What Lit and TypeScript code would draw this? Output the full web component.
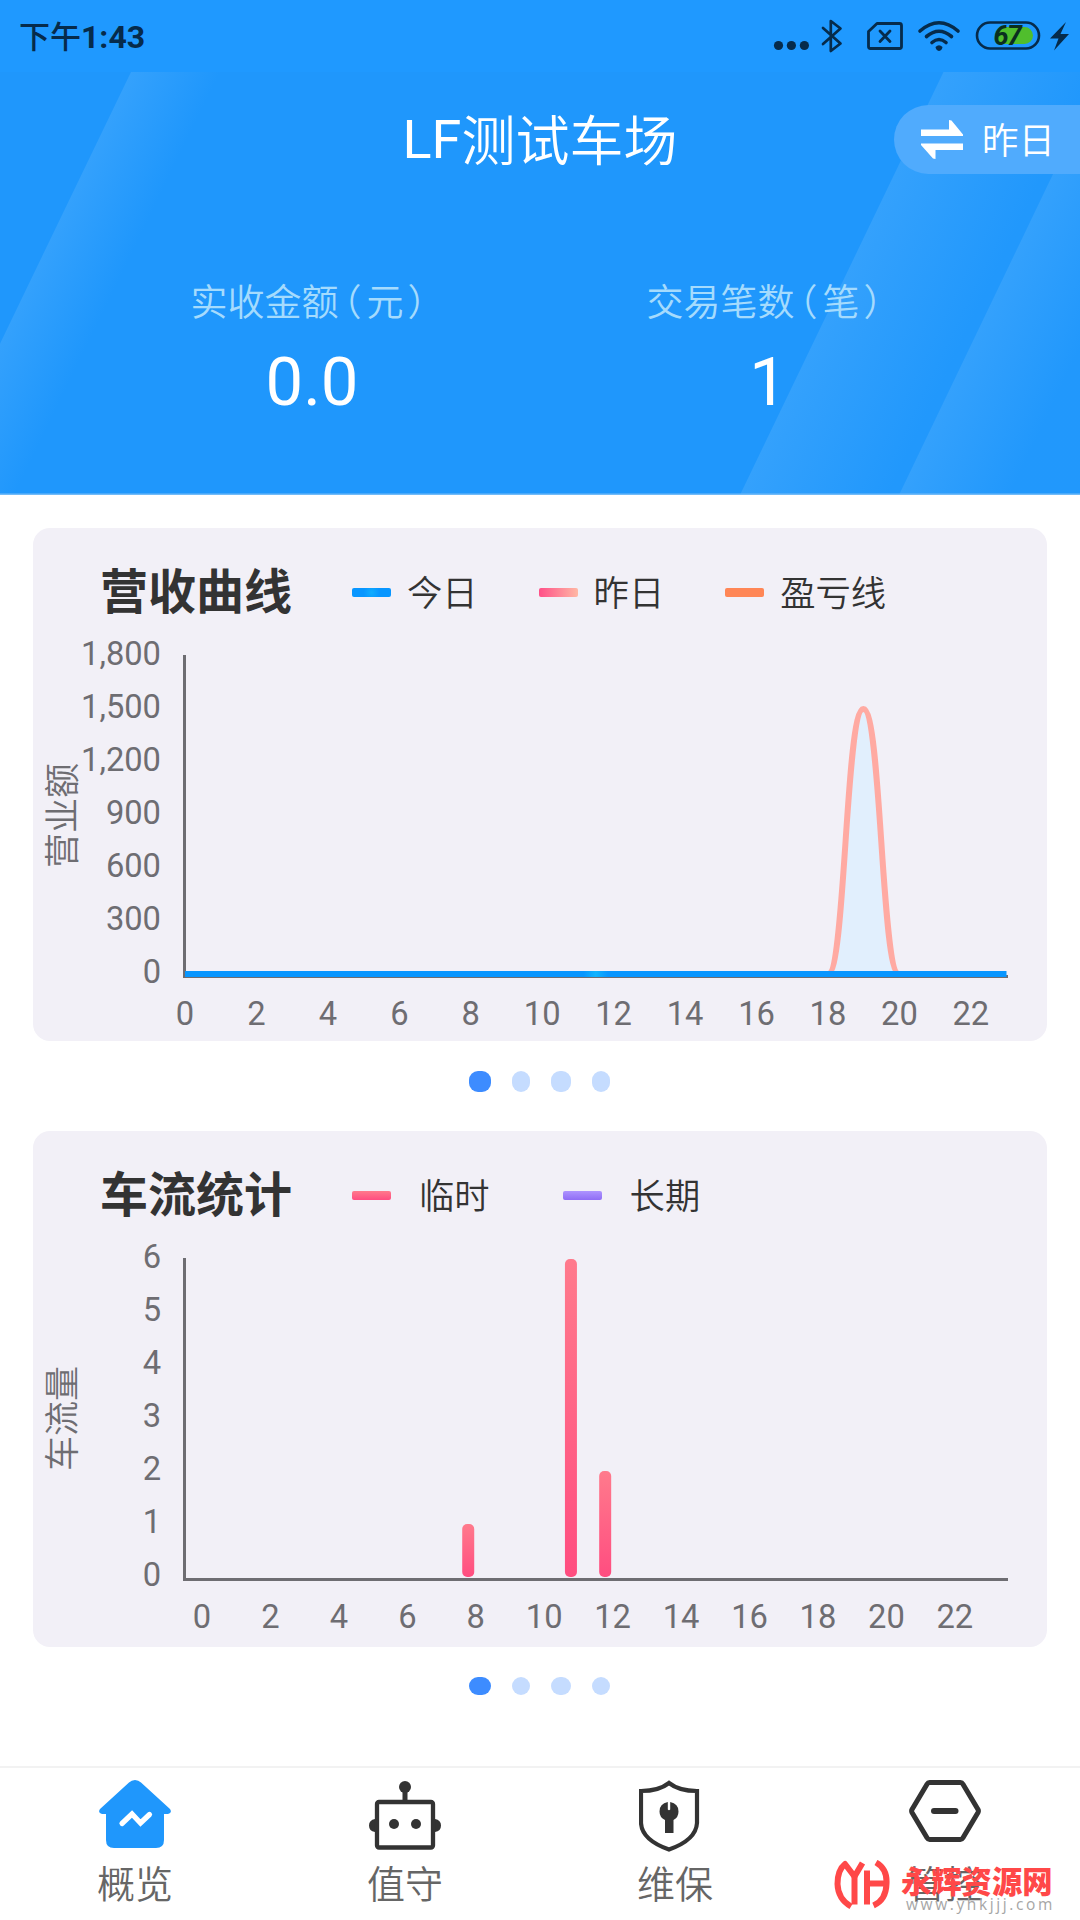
import { LitElement, html, svg, css } from "lit";
import { customElement, property } from "lit/decorators.js";

const FONT = css`Roboto, "Noto Sans CJK SC", sans-serif`;

interface LegendItem {
  label: string;
  kind: string;
}

@customElement("status-bar")
class StatusBar extends LitElement {
  static styles = css`
    :host {
      display: flex;
      align-items: center;
      justify-content: space-between;
      height: 72px;
      padding: 0 11px 0 19px;
      box-sizing: border-box;
      background: #1f99ff;
      color: #062b4b;
      font-family: ${FONT};
    }
    .time {
      padding-top: 2px;
      font-size: 32px;
      line-height: 40px;
      font-weight: 700;
      white-space: nowrap;
    }
    .cn {
      font-size: 31px;
      font-weight: 500;
    }
    svg {
      display: block;
    }
    .level {
      font: italic 700 27px Roboto, sans-serif;
      letter-spacing: -1.5px;
    }
  `;
  render() {
    return html`
      <div class="time"><span class="cn">下午</span>1:43</div>
      <svg width="300" height="72" viewBox="769 0 300 72" fill="none" stroke="#062b4b">
        <g fill="#062b4b" stroke="none">
          <circle cx="778.5" cy="45.5" r="4.6" />
          <circle cx="791.4" cy="45.5" r="4.6" />
          <circle cx="804.4" cy="45.5" r="4.6" />
        </g>
        <path d="M823 28 L840.500 43.500 L830.800 51 V21 L840.500 28.500 L823 44" stroke-width="2.7" stroke-linejoin="round" stroke-linecap="round" />
        <path d="M877 23.500 H899.500 Q901.500 23.500 901.500 25.500 V46.500 Q901.500 48.500 899.500 48.500 H870.500 Q868.500 48.500 868.500 46.500 V31.500 Z" stroke-width="2.8" stroke-linejoin="round" />
        <path d="M880 31 L890 41.500 M890 31 L880 41.500" stroke-width="2.8" stroke-linecap="round" />
        <g stroke-width="3.6" stroke-linecap="round">
          <path d="M920 31 Q939 14.500 958 31" />
          <path d="M926.500 36.500 Q939 26 951.500 36.500" />
          <path d="M932 42.500 Q939 36.500 946 42.500" />
        </g>
        <path d="M935.500 47 Q939 43.500 942.500 47 Q942 50.500 939 51 Q936 50.500 935.500 47 Z" fill="#062b4b" stroke="none" />
        <rect x="977" y="22.500" width="62" height="26" rx="13" stroke-width="2.6" />
        <path d="M1000 27 H1024.500 A8.500 8.500 0 0 1 1024.500 44 H1000 Q994 35 1000 27 Z" fill="#50be2d" stroke="none" />
        <text class="level" x="993.500" y="45" fill="#0a2e20" stroke="none">67</text>
        <path d="M1066 22 L1050 38.500 H1058.500 L1054 50.500 L1069 34 H1060.500 Z" fill="#062b4b" stroke="none" />
      </svg>
    `;
  }
}

@customElement("summary-header")
class SummaryHeader extends LitElement {
  static styles = css`
    :host {
      display: block;
      position: relative;
      height: 423px;
      background: #1f97fc;
      color: #fff;
      font-family: ${FONT};
    }
    .backdrop {
      position: absolute;
      inset: 0;
      display: block;
    }
    .content {
      position: relative;
      display: flex;
      flex-direction: column;
    }
    .titlebar {
      display: grid;
      grid-template-columns: 1fr auto 1fr;
      align-items: center;
      height: 69px;
      margin-top: 33px;
    }
    .title {
      grid-column: 2;
      font-size: 54px;
      line-height: 69px;
      white-space: nowrap;
    }
    .light {
      font-weight: 350;
      line-height: 1;
      vertical-align: -3px;
    }
    .switch {
      justify-self: end;
      display: flex;
      align-items: center;
      box-sizing: border-box;
      width: 186px;
      height: 69px;
      padding-left: 27px;
      gap: 19px;
      border-radius: 35px 0 0 35px;
      background: #50abfd;
      font-size: 36.500px;
      font-weight: 350;
      white-space: nowrap;
    }
    .switch svg {
      flex: none;
    }
    .switch span {
      padding-bottom: 2px;
    }
    .stats {
      display: grid;
      grid-template-columns: 456px 456px;
      padding: 105px 84px 0;
    }
    .stat {
      display: flex;
      flex-direction: column;
      align-items: center;
    }
    .label {
      height: 50px;
      line-height: 50px;
      font-size: 37px;
      font-weight: 350;
      color: #a5dbfd;
      white-space: nowrap;
    }
    .open {
      margin-left: -14px;
      margin-right: 5px;
    }
    .close {
      margin-left: 4px;
      margin-right: -11px;
    }
    .value {
      margin-top: 13px;
      height: 80px;
      line-height: 80px;
      font-size: 67px;
    }
  `;
  render() {
    return html`
      <svg class="backdrop" width="1080" height="423" viewBox="0 72 1080 423">
        <defs>
          <linearGradient id="a" gradientUnits="userSpaceOnUse" x1="65" y1="208" x2="137" y2="243">
            <stop offset="0" stop-color="#34a1fc" />
            <stop offset="1" stop-color="#34a1fc" stop-opacity="0" />
          </linearGradient>
          <linearGradient id="b" gradientUnits="userSpaceOnUse" x1="842" y1="284" x2="962" y2="342">
            <stop offset="0" stop-color="#34a1fc" />
            <stop offset="1" stop-color="#34a1fc" stop-opacity="0.1" />
          </linearGradient>
          <linearGradient id="c" gradientUnits="userSpaceOnUse" x1="1000" y1="284" x2="1090" y2="327">
            <stop offset="0" stop-color="#34a1fc" />
            <stop offset="1" stop-color="#34a1fc" stop-opacity="0.1" />
          </linearGradient>
        </defs>
        <path d="M131 72 H230 L27 495 H-73 Z" fill="url(#a)" />
        <path d="M943.500 72 H1102 L899 495 H740 Z" fill="url(#b)" />
        <path d="M1102 72 H1300 V495 H899 Z" fill="url(#c)" />
        <rect x="0" y="493.500" width="1080" height="1.500" fill="#72bbf8" />
      </svg>
      <div class="content">
        <div class="titlebar">
          <div class="title">LF<span class="light">测试车场</span></div>
          <div class="switch">
            <svg width="42" height="40" viewBox="0 0 42 40" fill="#fff">
              <path d="M0 9.500 H28 V0 L30.500 0.500 L42 14.500 V16 H0 Z" />
              <path d="M42 30 H14.500 V39 L12 38.500 L0 25 V23.500 H42 Z" />
            </svg>
            <span>昨日</span>
          </div>
        </div>
        <div class="stats">
          <div class="stat">
            <div class="label">实收金额<span class="open">（</span>元<span class="close">）</span></div>
            <div class="value">0.0</div>
          </div>
          <div class="stat">
            <div class="label">交易笔数<span class="open">（</span>笔<span class="close">）</span></div>
            <div class="value">1</div>
          </div>
        </div>
      </div>
    `;
  }
}

@customElement("chart-card")
class ChartCard extends LitElement {
  @property() heading = "";
  @property() variant: "line" | "bar" = "line";
  @property() axisName = "";
  @property({ attribute: false }) legend: LegendItem[] = [];
  @property({ attribute: false }) ticks: string[] = [];
  @property({ attribute: false }) bars: { hour: number; value: number }[] = [];

  static styles = css`
    :host {
      display: block;
      overflow: hidden;
      border-radius: 17px;
      background: #f2f0f7;
      color: #333;
      font-family: ${FONT};
    }
    .head {
      display: flex;
      align-items: center;
      height: 70px;
      padding: 29px 0 5px 67px;
    }
    .heading {
      width: 252px;
      padding-top: 1px;
      font-size: 48px;
      line-height: 70px;
      font-weight: 700;
      white-space: nowrap;
    }
    .legend {
      display: flex;
      gap: 61px;
    }
    .legend.wide {
      gap: 73px;
    }
    .item {
      display: flex;
      align-items: center;
      gap: 16px;
      font-size: 35.300px;
      line-height: 46px;
      font-weight: 350;
      white-space: nowrap;
    }
    .item span:last-child {
      padding-top: 4px;
    }
    .item:last-child {
      margin-right: 0;
    }
    .wide .item {
      gap: 28px;
    }
    .swatch {
      width: 39px;
      height: 9px;
      border-radius: 2px;
    }
    .today {
      background: radial-gradient(circle at 50% 50%, #10adff 0, #0896ff 8px);
    }
    .yesterday {
      background: linear-gradient(90deg, #ff5088, #ffb8a5);
    }
    .balance {
      background: #ff8656;
    }
    .temp {
      background: linear-gradient(180deg, #ff7a8c, #ff4d80);
    }
    .long {
      background: linear-gradient(180deg, #ae94ff, #8f6df5);
    }
    svg {
      display: block;
    }
    text {
      font-family: ${FONT};
      font-size: 32.700px;
      fill: #6e6d72;
    }
    .axis-name {
      font-size: 35px;
      font-weight: 350;
    }
  `;

  private hours(x0: number, step: number) {
    return Array.from({ length: 12 }, (_, i) => svg`
      <text x=${x0 + i * 2 * step} y="393" text-anchor="middle">${i * 2}</text>`);
  }

  private linePlot() {
    return svg`
      <path d="M795 342 C812.500 342 812.500 77 830.400 77 C848.300 77 848.300 342 866 342 Z" fill="#e1effd" />
      <path d="M795 342 C812.500 342 812.500 77 830.400 77 C848.300 77 848.300 342 866 342" fill="none" stroke="#ffaaa2" stroke-width="6" />
      <path d="M151.500 344.500 H975" stroke="#6e6d72" stroke-width="3" />
      <rect x="152" y="339" width="821.500" height="6" fill="url(#base)" />
      ${this.hours(152, 35.72)}`;
  }

  private barPlot() {
    return svg`
      <path d="M151.500 344.500 H975" stroke="#6e6d72" stroke-width="3" />
      ${this.bars.map((b) => svg`
        <rect x=${155.300 + b.hour * 34.240} y=${342 - b.value * 53} width="12" height=${b.value * 53} rx="5" fill="url(#bar)" />`)}
      ${this.hours(169, 34.22)}`;
  }

  render() {
    return html`
      <div class="head">
        <div class="heading">${this.heading}</div>
        <div class="legend ${this.variant === "bar" ? "wide" : ""}">
          ${this.legend.map((l) => html`<div class="item"><span class="swatch ${l.kind}"></span><span>${l.label}</span></div>`)}
        </div>
      </div>
      <svg width="1014" height="410" viewBox="0 0 1014 410">
        <defs>
          <linearGradient id="base" gradientUnits="userSpaceOnUse" x1="152" y1="0" x2="973.500" y2="0">
            <stop offset="0" stop-color="#0896ff" />
            <stop offset="0.485" stop-color="#0896ff" />
            <stop offset="0.5" stop-color="#10b4ff" />
            <stop offset="0.515" stop-color="#0896ff" />
            <stop offset="1" stop-color="#0896ff" />
          </linearGradient>
          <linearGradient id="bar" x1="0" y1="0" x2="0" y2="1">
            <stop offset="0" stop-color="#ff7a8c" />
            <stop offset="1" stop-color="#ff4d80" />
          </linearGradient>
        </defs>
        ${this.ticks.map((t, i) => svg`<text x="128" y=${32.500 + i * 53} text-anchor="end">${t}</text>`)}
        <path d="M151.500 23 V346" stroke="#6e6d72" stroke-width="3" />
        ${this.variant === "line" ? this.linePlot() : this.barPlot()}
        <text class="axis-name" transform="translate(42 183.500) rotate(-90)" text-anchor="middle">${this.axisName}</text>
      </svg>
    `;
  }
}

@customElement("page-dots")
class PageDots extends LitElement {
  static styles = css`
    :host {
      display: grid;
      grid-template-columns: 22px 18px 20px 18px;
      justify-content: start;
      column-gap: 21px;
      padding-left: 469px;
    }
    .dot {
      height: var(--dot-height, 20.500px);
      border-radius: 9px;
      background: #c5dcff;
    }
    .on {
      background: #3d8cff;
    }
  `;
  render() {
    return html`<i class="dot on"></i><i class="dot"></i><i class="dot"></i><i class="dot"></i>`;
  }
}

@customElement("tab-bar")
class TabBar extends LitElement {
  static styles = css`
    :host {
      display: grid;
      grid-template-columns: repeat(4, 1fr);
      position: relative;
      box-sizing: border-box;
      height: 154px;
      border-top: 2px solid #f2f2f2;
      background: #fff;
      font-family: ${FONT};
    }
    .tab {
      display: flex;
      flex-direction: column;
      align-items: center;
      padding-top: 12px;
      color: #666;
      font-size: 38px;
      line-height: 50px;
      font-weight: 350;
    }
    .tab svg {
      margin-bottom: 8px;
      display: block;
    }
    .mark {
      position: absolute;
      left: 834px;
      top: 92px;
      display: flex;
      gap: 11px;
      color: #ff4848;
    }
    .site {
      display: flex;
      flex-direction: column;
      padding-top: 4px;
    }
    .name {
      font-family: "Noto Sans CJK SC", sans-serif;
      font-size: 30.300px;
      line-height: 32px;
      font-weight: 900;
      white-space: nowrap;
    }
    .url {
      margin-left: 5px;
      font-family: "Open Sans", sans-serif;
      font-size: 15.500px;
      line-height: 16px;
      letter-spacing: 2.600px;
      color: #a6a6a6;
    }
  `;
  render() {
    return html`
      <div class="tab">
        <svg width="72" height="72" viewBox="0 0 72 72">
          <path d="M36 0 Q39.500 0 42 2.500 L71 29 Q73.500 33 69 34 H65 V60 Q65 68 57 68 H15 Q7 68 7 60 V34 H3 Q-1.500 33 1 29 L30 2.500 Q32.500 0 36 0 Z" fill="#1f97fc" />
          <path d="M23 43.500 L33 34 L41.500 43 L50.500 34.500" fill="none" stroke="#fff" stroke-width="5.200" stroke-linecap="round" />
        </svg>
        概览
      </div>
      <div class="tab">
        <svg width="72" height="72" viewBox="0 0 72 72" fill="#333">
          <circle cx="36" cy="7" r="6" />
          <rect x="33.500" y="8" width="5" height="14" />
          <path d="M6 39 Q0 40 0 45.500 Q0 51 6 52 Z M66 39 Q72 40 72 45.500 Q72 51 66 52 Z" />
          <rect x="8" y="22" width="56" height="45.500" rx="2" fill="none" stroke="#333" stroke-width="4.300" />
          <circle cx="25" cy="44" r="5" />
          <circle cx="47" cy="44" r="5" />
        </svg>
        值守
      </div>
      <div class="tab">
        <svg width="72" height="72" viewBox="0 0 72 72">
          <path d="M30 3 Q40 11 58 11 V43 Q57 60 30 69.500 Q3 60 2 43 V11 Q20 11 30 3 Z" fill="none" stroke="#333" stroke-width="4.200" />
          <path d="M28.800 22 V29.500 Q30 31 31.200 29.500 V22 Q39.500 23.500 39.500 31.500 Q39.500 37.500 34.500 40 V53 H26 V40 Q20.500 37.500 20.500 31.500 Q20.500 23.500 28.800 22 Z" fill="#333" />
        </svg>
        维保
      </div>
      <div class="tab">
        <svg width="72" height="72" viewBox="0 0 72 72" fill="none" stroke="#333">
          <path d="M20.500 2.500 H51.500 Q53 2.500 54 4.200 L69 29.500 Q69.800 31 69 32.500 L54 57.800 Q53 59.500 51.500 59.500 H20.500 Q19 59.500 18 57.800 L3 32.500 Q2.200 31 3 29.500 L18 4.200 Q19 2.500 20.500 2.500 Z" stroke-width="5" />
          <path d="M25 31 H46.500" stroke-width="6" stroke-linecap="round" />
        </svg>
        管控
      </div>
      <div class="mark">
        <svg width="56" height="50" viewBox="0 0 56 50" fill="none" stroke="#ff4848" stroke-width="6" stroke-linejoin="round">
          <path d="M17 46.500 Q4 39 3.500 24 Q3.500 10 11 4 L20.500 16.500 L28.500 3" stroke-linecap="butt" />
          <path d="M20.500 15 V44.500 M33 10.500 V44.500 M33 23.500 H52" />
          <path d="M42 2.500 Q53.500 9 52.500 24 Q52 40 39.500 45.500" />
        </svg>
        <div class="site">
          <div class="name">永辉资源网</div>
          <div class="url">www.yhkjjj.com</div>
        </div>
      </div>
    `;
  }
}

@customElement("app-root")
class AppRoot extends LitElement {
  static styles = css`
    :host {
      display: flex;
      flex-direction: column;
      width: 1080px;
      height: 1920px;
      overflow: hidden;
      background: #fff;
    }
    .body {
      flex: 1;
      display: flex;
      flex-direction: column;
      padding: 33px 33px 0;
    }
    .revenue {
      height: 513px;
    }
    .traffic {
      height: 516px;
    }
    .dots {
      margin: 30px -33px 0;
      height: 60px;
    }
    .short {
      --dot-height: 18px;
    }
  `;
  private revenueLegend: LegendItem[] = [
    { label: "今日", kind: "today" },
    { label: "昨日", kind: "yesterday" },
    { label: "盈亏线", kind: "balance" },
  ];
  private trafficLegend: LegendItem[] = [
    { label: "临时", kind: "temp" },
    { label: "长期", kind: "long" },
  ];
  render() {
    return html`
      <status-bar></status-bar>
      <summary-header></summary-header>
      <div class="body">
        <chart-card class="revenue" heading="营收曲线" variant="line" axisName="营业额"
          .legend=${this.revenueLegend}
          .ticks=${["1,800", "1,500", "1,200", "900", "600", "300", "0"]}></chart-card>
        <page-dots class="dots"></page-dots>
        <chart-card class="traffic" heading="车流统计" variant="bar" axisName="车流量"
          .legend=${this.trafficLegend}
          .ticks=${["6", "5", "4", "3", "2", "1", "0"]}
          .bars=${[{ hour: 8, value: 1 }, { hour: 11, value: 6 }, { hour: 12, value: 2 }]}></chart-card>
        <page-dots class="dots short"></page-dots>
      </div>
      <tab-bar></tab-bar>
    `;
  }
}
